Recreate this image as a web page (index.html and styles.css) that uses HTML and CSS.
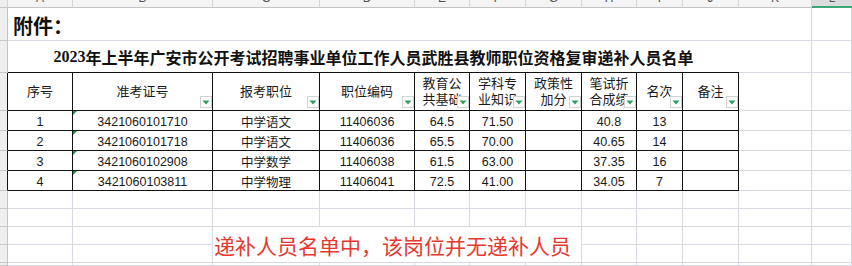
FILE: index.html
```html
<!DOCTYPE html>
<html lang="zh-CN">
<head>
<meta charset="utf-8">
<title>递补人员名单</title>
<link rel="stylesheet" href="styles.css">
</head>
<body>
<div class="sheet">
  <!-- column header row -->
  <div class="ch corner"></div>
  <div class="ch"><span>A</span></div>
  <div class="ch"><span>B</span></div>
  <div class="ch"><span>C</span></div>
  <div class="ch"><span>D</span></div>
  <div class="ch"><span>E</span></div>
  <div class="ch"><span>F</span></div>
  <div class="ch"><span>G</span></div>
  <div class="ch"><span>H</span></div>
  <div class="ch"><span>I</span></div>
  <div class="ch"><span>J</span></div>
  <div class="ch"><span>K</span></div>
  <div class="ch sel"><span>L</span></div>

  <!-- row 1 -->
  <div class="rh"></div>
  <div class="c attach">附件：</div>
  <div class="c"></div>
  <div class="c"></div>

  <!-- row 2 -->
  <div class="rh"></div>
  <div class="c title"><span class="digits">2023</span>年上半年广安市公开考试招聘事业单位工作人员武胜县教师职位资格复审递补人员名单</div>
  <div class="c"></div>
  <div class="c"></div>

  <!-- row 3: table header -->
  <div class="rh tb"></div>
  <div class="c t hd">序号</div>
  <div class="c t hd">准考证号<i class="fb"><svg width="8" height="5" viewBox="0 0 8 5"><polygon points="0.5,0.5 7.5,0.5 4,4.5" fill="#2e9e5f"/></svg></i></div>
  <div class="c t hd">报考职位<i class="fb"><svg width="8" height="5" viewBox="0 0 8 5"><polygon points="0.5,0.5 7.5,0.5 4,4.5" fill="#2e9e5f"/></svg></i></div>
  <div class="c t hd">职位编码<i class="fb"><svg width="8" height="5" viewBox="0 0 8 5"><polygon points="0.5,0.5 7.5,0.5 4,4.5" fill="#2e9e5f"/></svg></i></div>
  <div class="c t hd">教育公<br>共基础<i class="fb"><svg width="8" height="5" viewBox="0 0 8 5"><polygon points="0.5,0.5 7.5,0.5 4,4.5" fill="#2e9e5f"/></svg></i></div>
  <div class="c t hd">学科专<br>业知识<i class="fb"><svg width="8" height="5" viewBox="0 0 8 5"><polygon points="0.5,0.5 7.5,0.5 4,4.5" fill="#2e9e5f"/></svg></i></div>
  <div class="c t hd">政策性<br>加分<i class="fb"><svg width="8" height="5" viewBox="0 0 8 5"><polygon points="0.5,0.5 7.5,0.5 4,4.5" fill="#2e9e5f"/></svg></i></div>
  <div class="c t hd">笔试折<br>合成绩<i class="fb"><svg width="8" height="5" viewBox="0 0 8 5"><polygon points="0.5,0.5 7.5,0.5 4,4.5" fill="#2e9e5f"/></svg></i></div>
  <div class="c t hd">名次<i class="fb"><svg width="8" height="5" viewBox="0 0 8 5"><polygon points="0.5,0.5 7.5,0.5 4,4.5" fill="#2e9e5f"/></svg></i></div>
  <div class="c t hd">备注<i class="fb"><svg width="8" height="5" viewBox="0 0 8 5"><polygon points="0.5,0.5 7.5,0.5 4,4.5" fill="#2e9e5f"/></svg></i></div>
  <div class="c"></div>
  <div class="c"></div>

  <!-- data rows -->
  <div class="rh tb"></div>
  <div class="c t d">1</div>
  <div class="c t d txt">3421060101710</div>
  <div class="c t d">中学语文</div>
  <div class="c t d">11406036</div>
  <div class="c t d">64.5</div>
  <div class="c t d">71.50</div>
  <div class="c t d"></div>
  <div class="c t d">40.8</div>
  <div class="c t d">13</div>
  <div class="c t d"></div>
  <div class="c"></div>
  <div class="c"></div>

  <div class="rh tb"></div>
  <div class="c t d">2</div>
  <div class="c t d txt">3421060101718</div>
  <div class="c t d">中学语文</div>
  <div class="c t d">11406036</div>
  <div class="c t d">65.5</div>
  <div class="c t d">70.00</div>
  <div class="c t d"></div>
  <div class="c t d">40.65</div>
  <div class="c t d">14</div>
  <div class="c t d"></div>
  <div class="c"></div>
  <div class="c"></div>

  <div class="rh tb"></div>
  <div class="c t d">3</div>
  <div class="c t d txt">3421060102908</div>
  <div class="c t d">中学数学</div>
  <div class="c t d">11406038</div>
  <div class="c t d">61.5</div>
  <div class="c t d">63.00</div>
  <div class="c t d"></div>
  <div class="c t d">37.35</div>
  <div class="c t d">16</div>
  <div class="c t d"></div>
  <div class="c"></div>
  <div class="c"></div>

  <div class="rh tb"></div>
  <div class="c t d">4</div>
  <div class="c t d txt">3421060103811</div>
  <div class="c t d">中学物理</div>
  <div class="c t d">11406041</div>
  <div class="c t d">72.5</div>
  <div class="c t d">41.00</div>
  <div class="c t d"></div>
  <div class="c t d">34.05</div>
  <div class="c t d">7</div>
  <div class="c t d"></div>
  <div class="c"></div>
  <div class="c"></div>

  <!-- empty rows -->
  <div class="rh"></div>
  <div class="c"></div><div class="c"></div><div class="c"></div><div class="c"></div><div class="c"></div><div class="c"></div>
  <div class="c"></div><div class="c"></div><div class="c"></div><div class="c"></div><div class="c"></div><div class="c"></div>

  <div class="rh"></div>
  <div class="c"></div><div class="c"></div><div class="c"></div><div class="c"></div><div class="c"></div><div class="c"></div>
  <div class="c"></div><div class="c"></div><div class="c"></div><div class="c"></div><div class="c"></div><div class="c"></div>

  <!-- note rows -->
  <div class="rh"></div>
  <div class="c"></div>
  <div class="c"></div>
  <div class="c note">递补人员名单中，该岗位并无递补人员</div>
  <div class="c"></div><div class="c"></div><div class="c"></div><div class="c"></div><div class="c"></div>

  <div class="rh"></div>
  <div class="c"></div>
  <div class="c"></div>
  <div class="c"></div><div class="c"></div><div class="c"></div><div class="c"></div><div class="c"></div>

  <div class="rh"></div>
  <div class="c"></div><div class="c"></div><div class="c"></div><div class="c"></div><div class="c"></div><div class="c"></div>
  <div class="c"></div><div class="c"></div><div class="c"></div><div class="c"></div><div class="c"></div><div class="c"></div>
</div>
</body>
</html>
```

FILE: styles.css
```css
html, body {
  margin: 0;
  padding: 0;
  background: #ffffff;
}
body {
  width: 852px;
  height: 266px;
  overflow: hidden;
  font-family: "Liberation Sans", "Noto Sans CJK SC", sans-serif;
  color: #1a1a1a;
}
.sheet {
  display: grid;
  grid-template-columns: 8px 65px 140px 107px 95px 55px 56px 56px 55px 46px 56px 73px 40px;
  grid-template-rows: 8px 33px 32px 38px 20px 20px 20px 20px 18px 18px 18px 18px 3px;
  width: 852px;
  height: 266px;
  overflow: hidden;
}
.sheet > div {
  box-sizing: border-box;
  min-width: 0;
  min-height: 0;
}

/* column header */
.ch {
  background: #f4f4f4;
  border-right: 1px solid #d4d4d4;
  border-bottom: 1px solid #c4c4c4;
  overflow: hidden;
  text-align: center;
  font-size: 12px;
  color: #555;
}
.ch span {
  display: block;
  line-height: 14px;
  margin-top: -9px;
}
.ch.sel {
  background: #dcdcdc;
  border-bottom: 2px solid #3aa876;
  border-right: none;
}
.ch.corner {
  background: #eeeeee;
}

/* row header */
.rh {
  background: #eeeeee;
  border-right: 1px solid #c4c4c4;
  border-bottom: 1px solid #c8c8c8;
}
.rh.tb {
  border-right-color: #111;
}

/* cells */
.c {
  border-right: 1px solid #d9d9e4;
  border-bottom: 1px solid #d9d9e4;
  position: relative;
}
.attach {
  grid-column: span 10;
  border-right: none;
  display: flex;
  align-items: center;
  padding: 3px 0 0 5px;
  font-family: "Noto Sans CJK SC", sans-serif;
  font-size: 20px;
  font-weight: 700;
  color: #111;
}
.title {
  grid-column: span 10;
  border-right: none;
  border-bottom-color: #111;
  display: flex;
  align-items: center;
  justify-content: center;
  padding-top: 1px;
  font-family: "Noto Sans CJK SC", sans-serif;
  font-size: 16px;
  font-weight: 700;
  color: #111;
  white-space: nowrap;
}
.title .digits {
  font-family: "Liberation Serif", serif;
  font-weight: 700;
}

/* table */
.t {
  border-right-color: #111;
  border-bottom-color: #111;
}
.hd {
  display: flex;
  align-items: center;
  justify-content: center;
  text-align: center;
  overflow: hidden;
  font-size: 13px;
  line-height: 16px;
  color: #1a1a1a;
  padding-top: 1px;
}
.fb {
  position: absolute;
  right: 0;
  bottom: 2px;
  width: 12px;
  height: 12px;
  box-sizing: border-box;
  border: 1px solid #d2d2d2;
  background: #fdfdfd;
  display: flex;
  align-items: center;
  justify-content: center;
}
.fb svg {
  display: block;
}
.d {
  display: flex;
  align-items: center;
  justify-content: center;
  font-size: 12.5px;
  padding-top: 2px;
  white-space: nowrap;
  color: #1a1a1a;
}
.txt::before {
  content: "";
  position: absolute;
  left: 0;
  top: 0;
  width: 0;
  height: 0;
  border-top: 4px solid #1f8f45;
  border-right: 4px solid transparent;
}

/* note */
.note {
  grid-column: span 5;
  grid-row: span 2;
  display: flex;
  align-items: center;
  padding: 1px 0 0 1px;
  font-family: "Noto Sans CJK SC", sans-serif;
  font-size: 21px;
  color: #e5392f;
  white-space: nowrap;
  background: #ffffff;
}
```
